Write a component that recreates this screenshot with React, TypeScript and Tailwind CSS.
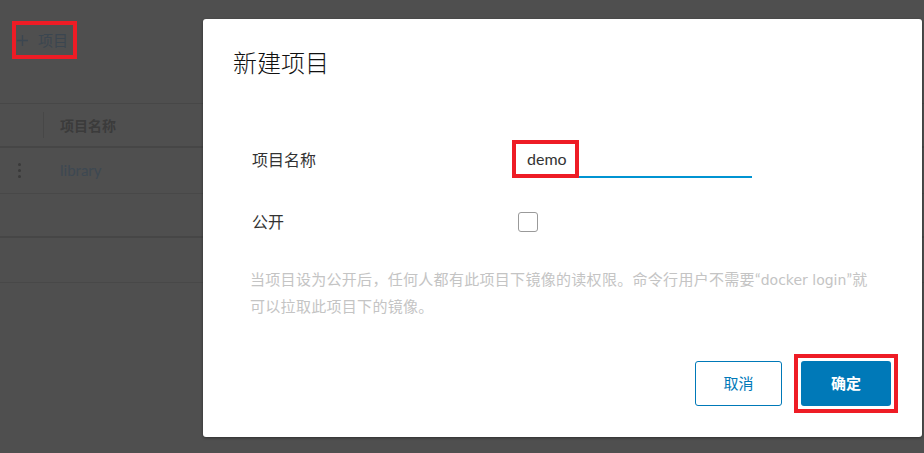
import React from 'react';

const font = { fontFamily: '"Lato", "Noto Sans CJK SC", sans-serif' };

function BackgroundPage() {
  return (
    <div className="w-[924px] h-[453px] bg-[#4f4f4f] flex flex-col">
      <div className="h-[103px] pl-[12px] pt-[21px]">
        <div className="w-[65px] h-[38px] border-4 border-[#ee1c25] flex items-center pl-[1px] gap-[10px] text-[#3b4650]">
          <svg width="11" height="11" viewBox="0 0 11 11" className="shrink-0">
            <path d="M5.5 0v11M0 5.5h11" stroke="#3b4650" strokeWidth="1.3" />
          </svg>
          <span className="text-[15px] leading-none">项目</span>
        </div>
      </div>
      <div className="h-[45px] border-t border-[#474747] border-b-2 border-b-[#464646] flex items-center">
        <div className="w-[44px] h-[26px] border-r border-[#474747]" />
        <span className="pl-[16px] text-[14px] font-bold text-[#3b3b3b]">项目名称</span>
      </div>
      <div className="h-[46px] border-b border-[#484848] flex items-center">
        <div className="w-[44px] flex justify-center pr-[6px]">
          <div className="flex flex-col gap-[3px]">
            <span className="w-[3px] h-[3px] rounded-full bg-[#3a3a3a]" />
            <span className="w-[3px] h-[3px] rounded-full bg-[#3a3a3a]" />
            <span className="w-[3px] h-[3px] rounded-full bg-[#3a3a3a]" />
          </div>
        </div>
        <span className="pl-[16px] text-[15px] text-[#3d4852]">library</span>
      </div>
      <div className="h-[44px] border-b-2 border-[#464646]" />
      <div className="h-[45px] border-b border-[#484848]" />
    </div>
  );
}

function Modal() {
  return (
    <div className="absolute left-[203px] top-[19px] w-[719px] h-[418px] bg-white rounded-[3px] shadow-[0_1px_3px_rgba(0,0,0,0.4)] flex flex-col px-[30px] pt-[28px] pb-[29px]">
      <h3 className="text-[24px] leading-[32px] font-light text-[#111]">新建项目</h3>
      <div className="mt-[61px] ml-[19px] flex flex-col">
        <div className="h-[40px] flex items-center">
          <label className="w-[265px] text-[16px] text-[#333]">项目名称</label>
          <div className="relative w-[235px] h-[36px] border-b-2 border-[#0094d2] flex items-center">
            <span className="text-[16px] text-[#333] pl-[10px]">demo</span>
            <div className="absolute left-[-5px] top-[-2px] w-[67px] h-[38px] border-4 border-[#ee1c25]" />
          </div>
        </div>
        <div className="mt-[22px] h-[40px] flex items-center">
          <label className="w-[266px] text-[16px] text-[#333]">公开</label>
          <div className="w-[20px] h-[20px] rounded-[3px] border border-[#9a9a9a] bg-white" />
        </div>
        <p className="mt-[24px] -ml-[2px] text-[15px] tracking-[0.3px] leading-[26px] text-[#c4c4c4] whitespace-nowrap">
          当项目设为公开后，任何人都有此项目下镜像的读权限。命令行用户不需要“
          <span className="font-['DejaVu_Sans'] text-[14px] tracking-normal">docker login</span>
          ”就
          <br />
          可以拉取此项目下的镜像。
        </p>
      </div>
      <div className="mt-auto flex justify-end items-center gap-[12px]">
        <button className="w-[87px] h-[45px] rounded-[3px] border border-[#0079b8] text-[#0079b8] text-[15px] bg-white">
          取消
        </button>
        <div className="border-4 border-[#ee1c25] p-[3px] -mr-[6px] -my-[5px]">
          <button className="w-[90px] h-[45px] rounded-[3px] bg-[#0079b8] text-white text-[15px] font-bold">
            确定
          </button>
        </div>
      </div>
    </div>
  );
}

export default function App() {
  return (
    <div className="relative w-[924px] h-[453px] overflow-hidden" style={font}>
      <BackgroundPage />
      <Modal />
    </div>
  );
}
